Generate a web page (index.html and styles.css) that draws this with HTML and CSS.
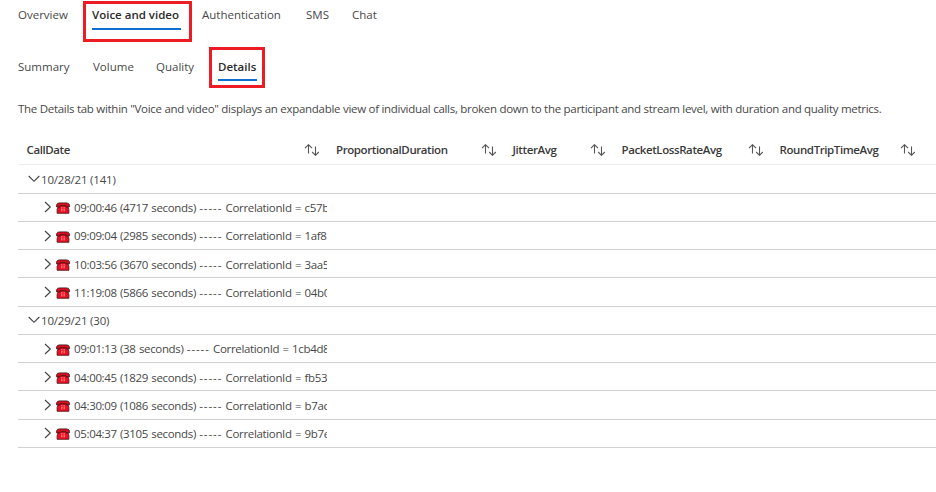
FILE: index.html
```html
<!DOCTYPE html>
<html lang="en">
<head>
<meta charset="utf-8">
<title>Voice and video details</title>
<link rel="stylesheet" href="styles.css">
</head>
<body>
<svg class="defs" width="0" height="0" aria-hidden="true">
  <symbol id="down" viewBox="0 0 12 12"><path d="M.7 3 6 8.3 11.3 3" fill="none" stroke="#444" stroke-width="1.15"/></symbol>
  <symbol id="right" viewBox="0 0 8 12"><path d="M1 1 6.3 6 1 11" fill="none" stroke="#444" stroke-width="1.15"/></symbol>
  <symbol id="sort" viewBox="0 0 16 12"><path d="M4.5 9.5V.8M1 4.1 4.5.7 8 4.1M11.5 2.5v8.8M8.2 8l3.3 3.3L14.8 8" fill="none" stroke="#555" stroke-width="1.1"/></symbol>
  <symbol id="phone" viewBox="0 0 14 12">
    <path d="M2.6 3.4h8.8l1.5 4v3.9H1.1V7.4z" fill="#e81123" stroke="#4a1014" stroke-width=".8"/>
    <path d="M.6 4.9V2.8Q1.2.9 3.3.9h7.4q2.1 0 2.7 1.9v2.1h-3.3V3.8H3.9v1.1z" fill="#d80f20" stroke="#3b1010" stroke-width=".8"/>
    <path d="M5 5.8h4M5 7.3h4M5 8.8h4" stroke="#ff9ba0" stroke-width=".9" stroke-dasharray="1 .5"/>
  </symbol>
</svg>
<nav class="tabs main">
  <span class="tab">Overview</span>
  <span class="tab active">Voice and video</span>
  <span class="tab">Authentication</span>
  <span class="tab">SMS</span>
  <span class="tab">Chat</span>
</nav>
<nav class="tabs sub">
  <span class="tab">Summary</span>
  <span class="tab">Volume</span>
  <span class="tab">Quality</span>
  <span class="tab active">Details</span>
</nav>
<p class="description">The Details tab within "Voice and video" displays an expandable view of individual calls, broken down to the participant and stream level, with duration and quality metrics.</p>
<main class="table">
  <header class="head">
    <div class="col"><span>CallDate</span><svg class="sort"><use href="#sort"/></svg></div>
    <div class="col"><span>ProportionalDuration</span><svg class="sort"><use href="#sort"/></svg></div>
    <div class="col"><span>JitterAvg</span><svg class="sort"><use href="#sort"/></svg></div>
    <div class="col"><span>PacketLossRateAvg</span><svg class="sort"><use href="#sort"/></svg></div>
    <div class="col"><span>RoundTripTimeAvg</span><svg class="sort"><use href="#sort"/></svg></div>
  </header>
  <div class="row group"><svg class="down"><use href="#down"/></svg><span>10/28/21 (141)</span></div>
  <div class="row call"><svg class="right"><use href="#right"/></svg><svg class="phone"><use href="#phone"/></svg><span class="text">09:00:46 (4717 seconds) <span class="dash">-----</span> CorrelationId = c57b</span></div>
  <div class="row call"><svg class="right"><use href="#right"/></svg><svg class="phone"><use href="#phone"/></svg><span class="text">09:09:04 (2985 seconds) <span class="dash">-----</span> CorrelationId = 1af8</span></div>
  <div class="row call"><svg class="right"><use href="#right"/></svg><svg class="phone"><use href="#phone"/></svg><span class="text">10:03:56 (3670 seconds) <span class="dash">-----</span> CorrelationId = 3aa5</span></div>
  <div class="row call"><svg class="right"><use href="#right"/></svg><svg class="phone"><use href="#phone"/></svg><span class="text">11:19:08 (5866 seconds) <span class="dash">-----</span> CorrelationId = 04b0</span></div>
  <div class="row group"><svg class="down"><use href="#down"/></svg><span>10/29/21 (30)</span></div>
  <div class="row call"><svg class="right"><use href="#right"/></svg><svg class="phone"><use href="#phone"/></svg><span class="text">09:01:13 (38 seconds) <span class="dash">-----</span> CorrelationId = 1cb4d8</span></div>
  <div class="row call"><svg class="right"><use href="#right"/></svg><svg class="phone"><use href="#phone"/></svg><span class="text">04:00:45 (1829 seconds) <span class="dash">-----</span> CorrelationId = fb53</span></div>
  <div class="row call"><svg class="right"><use href="#right"/></svg><svg class="phone"><use href="#phone"/></svg><span class="text">04:30:09 (1086 seconds) <span class="dash">-----</span> CorrelationId = b7ac</span></div>
  <div class="row call"><svg class="right"><use href="#right"/></svg><svg class="phone"><use href="#phone"/></svg><span class="text">05:04:37 (3105 seconds) <span class="dash">-----</span> CorrelationId = 9b7e</span></div>
</main>
</body>
</html>
```
FILE: styles.css
```css
*, *::after { box-sizing: border-box; }
body {
  margin: 0;
  height: 492px;
  overflow: hidden;
  background: #fff;
  color: #484848;
  font: 11.5px/16px "Open Sans", "Noto Sans", sans-serif;
  white-space: nowrap;
}
svg { display: block; flex: none; }
.defs { position: absolute; }
.tabs { display: grid; padding-left: 18px; }
.main { grid-template-columns: 74px 110px 104px 46px 50px; height: 47px; padding-top: 7px; }
.sub { grid-template-columns: 75px 63px 62px 50px; height: 47px; padding-top: 12px; }
.tab { position: relative; justify-self: start; height: 23px; }
.sub .tab { height: 22px; }
.active { color: #2b2b2b; font-weight: 600; border-bottom: 2px solid #0f6fd0; }
.active::after { content: ""; position: absolute; border: 3px solid #ed1c24; }
.main .active { width: 89px; }
.main .active::after { left: -9px; top: -6px; width: 109px; height: 41px; }
.sub .active { width: 39px; }
.sub .active::after { left: -9px; top: -12px; width: 56px; height: 41px; }
.description { margin: 0; padding: 7px 0 0 18px; height: 41px; letter-spacing: -.287px; }
.table { margin-left: 18px; }
.head {
  display: grid;
  grid-template-columns: 309.5px 176.5px 109px 158px 152px;
  height: 30.4px;
  border-bottom: 1px solid #ededed;
  color: #3a3a3a;
  font-weight: 600;
  letter-spacing: -.4px;
}
.col { display: flex; align-items: center; justify-content: space-between; padding: 0 7.5px 0 8.5px; }
.sort { width: 16px; height: 12px; }
.row { display: flex; align-items: center; height: 28.25px; border-bottom: 1px solid #d2d2d2; letter-spacing: -.2px; }
.row > span { padding-top: 1.5px; }
.group { padding-left: 10px; }
.down { width: 12px; height: 12px; margin-right: 1px; }
.call { padding-left: 26px; letter-spacing: -.34px; word-spacing: .65px; }
.right { width: 8px; height: 12px; margin-right: 4px; }
.phone { width: 14px; height: 12px; margin: 2px 4px 0 0; }
.text { width: 253px; overflow: hidden; }
.dash { letter-spacing: .9px; }
```
